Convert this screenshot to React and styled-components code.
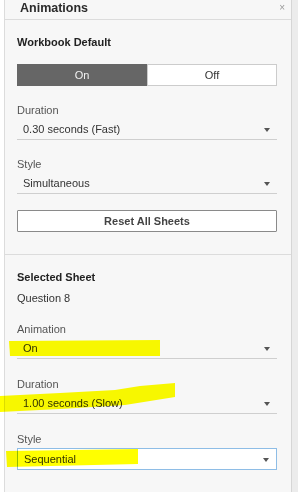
import React from 'react';
import styled, {createGlobalStyle} from 'styled-components';

const GlobalStyle = createGlobalStyle`
  body {
    margin: 0;
    background: #ffffff;
    font-family: "Liberation Sans", Arial, sans-serif;
  }
`;

const Field = ({label, value, focused, gap}) => (
    <FieldBox gap={gap}>
      <Label>{label}</Label>
      <SelectRow focused={focused}>
        <span>{value}</span>
        <Arrow/>
      </SelectRow>
    </FieldBox>
);

const App = () => {
  return (
      <Page>
        <GlobalStyle/>
        <Panel>
          <Header>
            <Title>Animations</Title>
            <Close>×</Close>
          </Header>
          <Section>
            <Heading>Workbook Default</Heading>
            <Toggle>
              <ToggleOption active>On</ToggleOption>
              <ToggleOption>Off</ToggleOption>
            </Toggle>
            <Field label="Duration" value="0.30 seconds (Fast)"/>
            <Field label="Style" value="Simultaneous"/>
            <ResetButton>Reset All Sheets</ResetButton>
          </Section>
          <Section>
            <Heading>Selected Sheet</Heading>
            <SheetName>Question 8</SheetName>
            <Field label="Animation" value="On"/>
            <Field label="Duration" value="1.00 seconds (Slow)" gap={18}/>
            <Field label="Style" value="Sequential" gap={18} focused/>
          </Section>
        </Panel>
        <SideStrip/>
        <Marker viewBox="0 0 298 492" width="298" height="492">
          <path d="M9 341 L160 340 L160 356 L10 356 Z" fill="#ffff00"/>
          <path d="M0 396 L60 393 L115 390 L140 386 L175 383 L175 397 L125 405 L60 409 L0 412 Z" fill="#ffff00"/>
          <path d="M6 451 L138 449 L138 464 L7 467 Z" fill="#ffff00"/>
        </Marker>
      </Page>
  );
};

export default App;

const Page = styled.div`
  position: relative;
  display: flex;
  width: 298px;
  height: 492px;
  padding-left: 4px;
  box-sizing: border-box;
  overflow: hidden;
`;

const Panel = styled.div`
  width: 288px;
  height: 100%;
  box-sizing: border-box;
  background: #f7f7f7;
  border-left: 1px solid #dcdcdc;
  border-right: 1px solid #d6d6d6;
  display: flex;
  flex-direction: column;
`;

const SideStrip = styled.div`
  flex: 1;
  background: #ececec;
`;

const Header = styled.div`
  height: 20px;
  border-bottom: 1px solid #dcdcdc;
  display: flex;
  align-items: center;
  justify-content: space-between;
  padding: 0 6px 0 15px;
`;

const Title = styled.div`
  font-size: 12.5px;
  font-weight: bold;
  color: #2b2b2b;
  margin-top: -3px;
`;

const Close = styled.div`
  font-size: 10px;
  color: #9a9a9a;
  margin-top: -4px;
`;

const Section = styled.div`
  padding: 15px 14px 22px 12px;
  border-bottom: 1px solid #dcdcdc;
  display: flex;
  flex-direction: column;

  &:last-child {
    border-bottom: none;
    padding-top: 15px;
  }
`;

const Heading = styled.div`
  font-size: 11px;
  line-height: 14px;
  font-weight: bold;
  color: #222;
`;

const SheetName = styled.div`
  font-size: 11px;
  line-height: 14px;
  color: #333;
  margin-top: 7px;
`;

const Toggle = styled.div`
  display: flex;
  margin-top: 15px;
  height: 22px;
`;

const ToggleOption = styled.div`
  flex: 1;
  display: flex;
  align-items: center;
  justify-content: center;
  font-size: 11px;
  box-sizing: border-box;
  background: ${p => p.active ? '#666666' : '#ffffff'};
  color: ${p => p.active ? '#f2f2f2' : '#333'};
  border: 1px solid ${p => p.active ? '#666666' : '#cccccc'};
`;

const FieldBox = styled.div`
  margin-top: ${p => p.gap || 17}px;
  display: flex;
  flex-direction: column;
`;

const Label = styled.div`
  font-size: 11px;
  line-height: 14px;
  color: #555;
`;

const SelectRow = styled.div`
  margin-top: ${p => p.focused ? '2px' : '1px'};
  height: ${p => p.focused ? '22px' : '21px'};
  box-sizing: ${p => p.focused ? 'border-box' : 'content-box'};
  display: flex;
  align-items: center;
  justify-content: space-between;
  padding: 0 7px 0 6px;
  font-size: 11px;
  color: #333;
  background: ${p => p.focused ? '#ffffff' : 'transparent'};
  border: ${p => p.focused ? '1px solid #8ebde6' : 'none'};
  border-bottom: 1px solid ${p => p.focused ? '#8ebde6' : '#cfcfcf'};
`;

const Arrow = styled.span`
  width: 0;
  height: 0;
  border-left: 3px solid transparent;
  border-right: 3px solid transparent;
  border-top: 4px solid #555;
  margin-top: 2px;
`;

const ResetButton = styled.div`
  margin-top: 16px;
  height: 22px;
  box-sizing: border-box;
  border: 1px solid #8a8a8a;
  border-radius: 1px;
  background: #fff;
  display: flex;
  align-items: center;
  justify-content: center;
  font-size: 11px;
  font-weight: bold;
  color: #444;
`;

const Marker = styled.svg`
  position: absolute;
  left: 0;
  top: 0;
  pointer-events: none;
  mix-blend-mode: multiply;
`;
